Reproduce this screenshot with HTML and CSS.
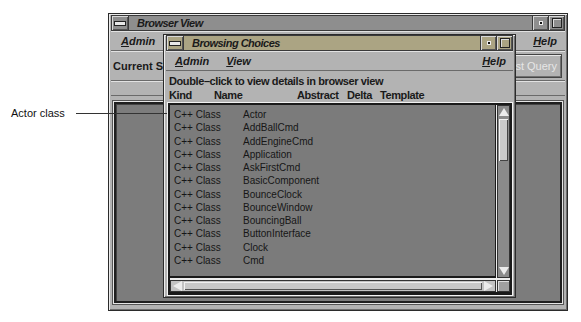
FILE: index.html
```html
<!DOCTYPE html>
<html lang="en">
<head>
    <meta charset="UTF-8">
    <title>Browsing Choices</title>
    <link rel="stylesheet" href="styles.css">
</head>
<body>
    <div class="desk">
        <!-- back window -->
        <div class="win back">
            <div class="titlebar">
                <span class="tb-btn menu-btn"><i></i></span>
                <span class="tb-title">Browser View</span>
                <span class="tb-btn min-btn"><i></i></span>
                <span class="tb-btn max-btn"><i></i></span>
            </div>
            <div class="menubar">
                <span class="menu"><u>A</u>dmin</span>
                <span class="menu help"><u>H</u>elp</span>
            </div>
            <div class="toolbar">
                <span class="tool-label">Current S</span>
                <span class="push">Last Query</span>
            </div>
            <div class="strip"></div>
            <div class="panel"><div class="panel-well"></div></div>
        </div>

        <!-- front window -->
        <div class="win front">
            <div class="titlebar">
                <span class="tb-btn menu-btn"><i></i></span>
                <span class="tb-title">Browsing Choices</span>
                <span class="tb-btn min-btn"><i></i></span>
                <span class="tb-btn max-btn"><i></i></span>
            </div>
            <div class="menubar">
                <span class="menu"><u>A</u>dmin</span>
                <span class="menu"><u>V</u>iew</span>
                <span class="menu help"><u>H</u>elp</span>
            </div>
            <div class="info">
                <div class="info-line">Double–click to view details in browser view</div>
                <div class="info-line heads">
                    <span class="h-kind">Kind</span>
                    <span class="h-name">Name</span>
                    <span class="h-abs">Abstract</span>
                    <span class="h-delta">Delta</span>
                    <span>Template</span>
                </div>
            </div>
            <div class="listframe">
                <div class="list">
                    <div class="row"><span class="kind">C++ Class</span>Actor</div>
                    <div class="row"><span class="kind">C++ Class</span>AddBallCmd</div>
                    <div class="row"><span class="kind">C++ Class</span>AddEngineCmd</div>
                    <div class="row"><span class="kind">C++ Class</span>Application</div>
                    <div class="row"><span class="kind">C++ Class</span>AskFirstCmd</div>
                    <div class="row"><span class="kind">C++ Class</span>BasicComponent</div>
                    <div class="row"><span class="kind">C++ Class</span>BounceClock</div>
                    <div class="row"><span class="kind">C++ Class</span>BounceWindow</div>
                    <div class="row"><span class="kind">C++ Class</span>BouncingBall</div>
                    <div class="row"><span class="kind">C++ Class</span>ButtonInterface</div>
                    <div class="row"><span class="kind">C++ Class</span>Clock</div>
                    <div class="row"><span class="kind">C++ Class</span>Cmd</div>
                </div>
                <div class="vbar">
                    <span class="arrow up"></span>
                    <span class="trough"><span class="thumb"></span></span>
                    <span class="arrow down"></span>
                </div>
                <div class="hbar">
                    <span class="arrow left"></span>
                    <span class="htrough"></span>
                    <span class="arrow right"></span>
                </div>
                <div class="corner"><i></i></div>
            </div>
        </div>

        <!-- annotation, drawn over the windows -->
        <div class="callout">
            <span class="callout-label">Actor class</span>
            <span class="callout-line"></span>
        </div>
    </div>
</body>
</html>
```

FILE: styles.css
```css
body {
    margin: 0;
    background-color: #ffffff;
    font-family: 'Liberation Sans', Arial, sans-serif;
    color: #1a1a1a;
}

.desk {
    position: relative;
    width: 581px;
    height: 322px;
    overflow: hidden;
}

/* annotation */
.callout {
    position: absolute;
    left: 11px;
    top: 106px;
    display: flex;
    align-items: center;
}

.callout-label {
    font-size: 11px;
    line-height: 14px;
    color: #111;
}

.callout-line {
    width: 91px;
    height: 1px;
    margin-left: 11px;
    background-color: #333;
}

/* windows */
.win {
    position: absolute;
    box-sizing: border-box;
    display: flex;
    flex-direction: column;
    background-color: #b3b3b3;
    border: 1px solid #2b2b2b;
    box-shadow: inset 1px 1px 0 #ececec, inset -1px -1px 0 #6e6e6e;
    padding: 1px 2px 2px 2px;
}

.back {
    left: 108px;
    top: 13px;
    width: 460px;
    height: 298px;
}

.front {
    left: 163px;
    top: 34px;
    width: 353px;
    height: 264px;
    padding-top: 0;
}

.titlebar {
    display: flex;
    box-sizing: border-box;
    height: 16px;
    flex: none;
    background-color: #8e8e8e;
    border: 1px solid #3a3a3a;
}

.front .titlebar {
    background-color: #aba483;
}

.tb-btn {
    display: flex;
    align-items: center;
    justify-content: center;
    width: 15px;
    box-shadow: inset 1px 1px 0 #d8d8d8, inset -1px -1px 0 #555;
    border-right: 1px solid #3a3a3a;
}

.menu-btn {
    width: 16px;
}

.menu-btn i {
    width: 10px;
    height: 3px;
    background-color: #e8e8e8;
    border: 1px solid #222;
}

.min-btn {
    border-left: 1px solid #3a3a3a;
}

.min-btn i {
    width: 2px;
    height: 2px;
    background-color: #111;
    border: 1px solid #eee;
}

.max-btn {
    border-right: none;
}

.max-btn i {
    width: 8px;
    height: 8px;
    border: 1px solid #222;
    box-shadow: inset 1px 1px 0 #ddd;
}

.tb-title {
    flex: 1;
    padding-left: 8px;
    font-size: 11px;
    line-height: 14px;
    font-weight: bold;
    font-style: italic;
    letter-spacing: -0.5px;
    white-space: nowrap;
    overflow: hidden;
}

.menubar {
    display: flex;
    height: 19px;
    flex: none;
    align-items: center;
    padding: 0 8px 0 10px;
    gap: 17px;
    border-bottom: 1px solid #6a6a6a;
    box-shadow: inset 0 1px 0 #e2e2e2;
}

.front .menubar {
    padding: 0 7px 0 9px;
}

.menu {
    font-size: 11px;
    font-weight: bold;
    font-style: italic;
}

.menu.help {
    margin-left: auto;
}

/* back window body */
.toolbar {
    display: flex;
    align-items: center;
    height: 29px;
    flex: none;
    padding: 0 3px 0 2px;
    border-bottom: 1px solid #6a6a6a;
    box-shadow: inset 0 1px 0 #e2e2e2;
}

.tool-label {
    white-space: nowrap;
    font-size: 11px;
    font-weight: bold;
}

.push {
    margin-left: auto;
    padding: 5px 4px;
    font-size: 11px;
    color: #e6e6e6;
    border: 1px solid #444;
    box-shadow: inset 1px 1px 0 #e8e8e8, inset -1px -1px 0 #707070;
}

.strip {
    height: 14px;
    flex: none;
    border-bottom: 1px solid #6a6a6a;
    box-shadow: inset 0 1px 0 #e2e2e2;
}

.panel {
    flex: 1;
    padding: 6px 3px 5px 3px;
    display: flex;
}

.panel-well {
    flex: 1;
    background-color: #7c7c7c;
    border: 2px solid #1f1f1f;
    box-shadow: 0 0 0 1px #e6e6e6, 0 0 0 2px #555, inset 1px 1px 0 #444;
}

/* front window body */
.info {
    height: 32px;
    flex: none;
    padding: 3px 0 0 3px;
    box-sizing: border-box;
}

.info-line {
    font-size: 11px;
    font-weight: bold;
    line-height: 14px;
    letter-spacing: -0.4px;
    white-space: nowrap;
}

.heads {
    display: flex;
}

.h-kind {
    width: 45px;
}

.h-name {
    width: 83px;
}

.h-abs {
    width: 50px;
}

.h-delta {
    width: 33px;
}

.listframe {
    flex: 1;
    display: grid;
    grid-template-columns: 1fr 13px;
    grid-template-rows: 1fr 12px;
    gap: 2px 1px;
    margin: 0 1px 0 2px;
    border: 2px solid #1a1a1a;
    border-bottom-width: 3px;
    background-color: #ededed;
    box-shadow: 0 0 0 1px #f2f2f2;
}

.list {
    background-color: #7b7b7b;
    padding: 3px 0 0 4px;
    border-right: 1px solid #1a1a1a;
    border-bottom: 2px solid #1a1a1a;
    overflow: hidden;
}

.row {
    font-size: 10px;
    line-height: 13.27px;
    color: #161616;
    white-space: nowrap;
}

.kind {
    display: inline-block;
    width: 69px;
}

.vbar {
    display: flex;
    flex-direction: column;
    background-color: #8b8b8b;
    border: 1px solid #333;
}

.trough {
    flex: 1;
    padding: 1px;
}

.thumb {
    display: block;
    height: 42px;
    background-color: #c9c9c9;
    box-shadow: inset 1px 1px 0 #f2f2f2, inset -1px -1px 0 #444;
}

.arrow {
    flex: none;
    width: 0;
    height: 0;
    margin: 2px auto;
}

.up {
    border-left: 5px solid transparent;
    border-right: 5px solid transparent;
    border-bottom: 8px solid #ececec;
}

.down {
    border-left: 5px solid transparent;
    border-right: 5px solid transparent;
    border-top: 8px solid #ececec;
}

.hbar {
    display: flex;
    align-items: center;
    background-color: #c2c2c2;
    border: 1px solid #333;
}

.htrough {
    flex: 1;
    align-self: stretch;
    margin: 1px;
    background-color: #c8c8c8;
    box-shadow: inset 1px 1px 0 #f0f0f0, inset -1px -1px 0 #555;
}

.left {
    margin: 0 1px 0 2px;
    border-top: 5px solid transparent;
    border-bottom: 5px solid transparent;
    border-right: 9px solid #ececec;
}

.right {
    margin: 0 2px 0 1px;
    border-top: 5px solid transparent;
    border-bottom: 5px solid transparent;
    border-left: 9px solid #ececec;
}

.corner {
    background-color: #a0a0a0;
    border: 1px solid #333;
    box-shadow: inset 1px 1px 0 #dcdcdc;
}
```
